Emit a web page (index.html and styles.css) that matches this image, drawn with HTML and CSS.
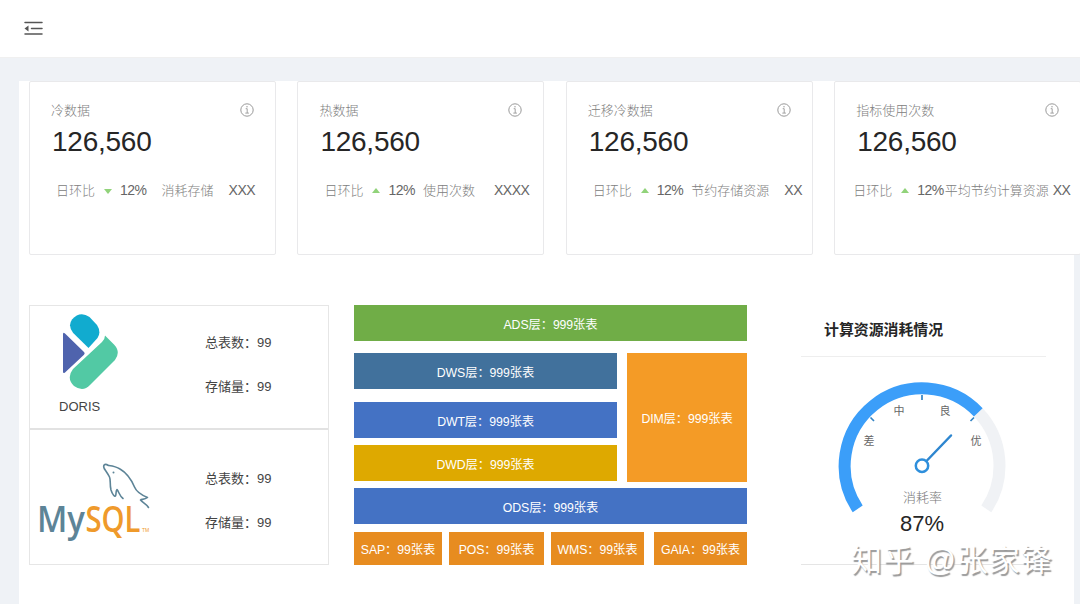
FILE: index.html
```html
<!DOCTYPE html>
<html lang="zh-CN">
<head>
<meta charset="utf-8">
<title>数据看板</title>
<link rel="stylesheet" href="styles.css">
</head>
<body>
<svg class="defs" width="0" height="0"><defs>
<symbol id="info" viewBox="0 0 14 14"><circle cx="7" cy="7" r="6.2" fill="none" stroke="#999" stroke-width="1"/><path d="M5.7 5.7H7.2V10M5.3 10.1H8.9" fill="none" stroke="#999" stroke-width=".9"/><circle cx="7" cy="3.8" r=".7" fill="#999"/></symbol>
</defs></svg>
<header class="topbar">
<svg class="fold" width="20" height="16" viewBox="0 0 20 16"><path d="M1 2.500H18M7.500 8.500H18M1 14H18" stroke="#555" stroke-width="1.500" stroke-linecap="round"/><path d="M4.500 5.500L.5 8.500L4.500 11.500Z" fill="#555"/></svg>
</header>
<main class="panel">
<section class="cards">
<article class="card"><div class="head"><span>冷数据</span><svg class="info"><use href="#info"/></svg></div><div class="num">126,560</div>
<div class="stats"><span>日环比</span><i class="tri down"></i><b>12%</b><span class="label l1">消耗存储</span><b class="val v1">XXX</b></div></article>
<article class="card"><div class="head"><span>热数据</span><svg class="info"><use href="#info"/></svg></div><div class="num">126,560</div>
<div class="stats"><span>日环比</span><i class="tri"></i><b>12%</b><span class="label l2">使用次数</span><b class="val v2">XXXX</b></div></article>
<article class="card"><div class="head"><span>迁移冷数据</span><svg class="info"><use href="#info"/></svg></div><div class="num">126,560</div>
<div class="stats"><span>日环比</span><i class="tri"></i><b>12%</b><span class="label l2">节约存储资源</span><b class="val v1">XX</b></div></article>
<article class="card"><div class="head"><span>指标使用次数</span><svg class="info"><use href="#info"/></svg></div><div class="num">126,560</div>
<div class="stats tight"><span>日环比</span><i class="tri"></i><b>12%</b><span class="label l4">平均节约计算资源</span><b class="val v4">XX</b></div></article>
</section>
<section class="lower">
<div class="sources">
<div class="source doris">
<div class="logo"><svg width="60" height="78" viewBox="0 0 60 78"><path d="M3 20.2Q3 17.5 5 19.5L24 38Q25.4 39.3 24 40.7L5 58.5Q3 60 3 57.5Z" fill="#4f63ad"/><path d="M13.2 19Q7.5 12 12 5.500Q20-3.500 29.500 3L37 11Q41.500 18 37.500 24L28.500 34Z" fill="#11abcf"/><path d="M45 21.500L54 30.500Q61 38 55 46L30 71Q23 78.500 14 72Q6 64 13 55L42 28Q45 25 45 21.500Z" fill="#52c9a4"/></svg><span>DORIS</span></div>
<dl class="facts"><dd>总表数：99</dd><dd>存储量：99</dd></dl>
</div>
<div class="source mysql">
<svg class="mylogo" width="118" height="84" viewBox="0 0 118 84">
<g fill="none" stroke="#5d8497" stroke-width="1.600" stroke-linejoin="round" stroke-linecap="round"><path d="M66.500 7C64.500 3 66.500 1 70.500 3.500C74 4 78 4.500 82 7C89 11 93.500 18 96.500 25C98.500 30 103.500 33 109.500 35.500C106.500 38 103.500 37 102.500 38C105 41 108.500 42 110.500 45.500"/><path d="M66.500 7C68.500 10 70 12 71.500 15C73 18.500 71.500 22 73 28C74.500 33 77 35 77.500 34C78.500 32 77.500 29 79 27.500C81 30 81.500 34 85 36.500"/></g><circle cx="75.500" cy="10.500" r="1" fill="#5d8497"/>
<text class="my" x="-1" y="69.500" textLength="48" lengthAdjust="spacingAndGlyphs">My</text><text class="sql" x="47.500" y="69.500" textLength="55" lengthAdjust="spacingAndGlyphs">SQL</text><text class="tm" x="104" y="70">TM</text></svg>
<dl class="facts"><dd>总表数：99</dd><dd>存储量：99</dd></dl>
</div>
</div>
<div class="layers">
<div class="box ads">ADS层：999张表</div>
<div class="mid"><div class="stack"><div class="box dws">DWS层：999张表</div><div class="box dwt">DWT层：999张表</div><div class="box dwd">DWD层：999张表</div></div><div class="box dim">DIM层：999张表</div></div>
<div class="box ods">ODS层：999张表</div>
<div class="systems"><div class="box">SAP：99张表</div><div class="box">POS：99张表</div><div class="box">WMS：99张表</div><div class="box gaia">GAIA：99张表</div></div>
</div>
<div class="usage">
<h2>计算资源消耗情况</h2>
<div class="chart"><svg width="245" height="208" viewBox="801 357 245 208">
<g fill="none" stroke-width="12"><path d="M978.300 412.450A77.500 77.500 0 0 1 986.300 508.900" stroke="#f0f2f5"/><path d="M857.700 508.900A77.500 77.500 0 0 1 978.300 412.450" stroke="#3b9ef9"/></g>
<path d="M922 395V400M870.500 417.500L874 421M974 417.500L970.500 421" stroke="#3384c4" stroke-width="1.700" fill="none"/>
<path d="M927 460.500L951 435.500" stroke="#2e86cf" stroke-width="2.500" stroke-linecap="round"/><circle cx="922" cy="465.700" r="6.200" fill="#fff" stroke="#2e8fdc" stroke-width="2.500"/>
<g class="grade"><text x="899" y="415">中</text><text x="945" y="415">良</text><text x="869" y="445">差</text><text x="976" y="445">优</text></g>
<text class="rate" x="922.500" y="502">消耗率</text><text class="percent" x="922" y="530.500">87%</text></svg></div>
</div>
</section>
</main>
<div class="watermark">知乎 @张家锋</div>
</body>
</html>
```
FILE: styles.css
```css
* { box-sizing: border-box; }
body { margin: 0; width: 1080px; height: 604px; overflow: hidden; position: relative; background: #eff2f6; color: #444; font-family: "Liberation Sans", "Noto Sans CJK SC", sans-serif; font-size: 13px; }
.defs { position: absolute; }
.topbar { height: 58px; padding: 20px 0 0 24px; background: #fff; border-bottom: 1px solid #f0f0f0; }
.fold { display: block; }
.panel { width: 1055px; height: 523px; margin: 23px 0 0 19px; padding-left: 10px; background: #fff; }
.cards { display: grid; grid-template-columns: repeat(4, 247px); column-gap: 21.4px; height: 174px; width: 1060px; }
.card { height: 174px; padding: 18px 0 0 21px; border: 1px solid #e9e9eb; border-radius: 2px; background: #fff; }
.head { display: flex; align-items: center; justify-content: space-between; height: 20px; padding-right: 21px; color: #808080; font-weight: 300; }
.head span { line-height: 18px; padding-top: 1px; }
.info { width: 14px; height: 14px; }
.num { height: 42px; font-size: 28px; line-height: 43px; color: #262626; padding-left: 1px; letter-spacing: -.25px; }
.stats { display: flex; align-items: baseline; height: 20px; margin-top: 18px; padding-left: 5px; color: #808080; font-weight: 300; line-height: 20px; white-space: nowrap; }
.stats.tight { padding-left: 0; margin-left: -3px; }
.stats b { font-size: 14px; font-weight: 400; color: #666; letter-spacing: -.5px; }
.tri { align-self: center; width: 8px; margin: 0 8px 0 9px; border: 4px solid transparent; border-top: 0; border-bottom: 5px solid #91d37a; }
.tri.down { margin-top: 2px; border-bottom: 0; border-top: 5px solid #91d37a; }
.l1 { margin-left: 15px; }
.l2 { margin-left: 8px; }
.l4 { margin-left: 1px; }
.v1 { margin-left: 15px; }
.v2 { margin-left: 19px; }
.v4 { margin-left: 4px; }
.lower { display: flex; padding-top: 50px; }
.sources { width: 300px; height: 260px; border: 1px solid #e6e6e6; }
.source { display: flex; }
.doris { height: 124px; border-bottom: 2px solid #e2e2e2; }
.logo { display: flex; flex-direction: column; width: 175px; padding: 8px 0 0 30px; }
.logo span { margin: 7px 0 0 -1px; line-height: 16px; }
.facts { margin: 0; padding-top: 27px; line-height: 20px; }
.facts dd { margin: 0 0 24px; }
.mylogo { margin: 32px 49px 0 8px; overflow: visible; }
.mysql .facts { padding-top: 39px; }
.my, .sql { font-family: "Open Sans", sans-serif; font-size: 36px; font-weight: 600; }
.my { fill: #5d8497; }
.sql { fill: #ef9a2b; }
.tm { font-size: 5px; fill: #ef9a2b; }
.layers { width: 393px; margin-left: 25px; }
.box { display: flex; align-items: center; justify-content: center; height: 36px; padding-top: 1px; color: #fff; font-size: 12.3px; letter-spacing: -.1px; white-space: nowrap; }
.ads { background: #70ad47; }
.mid { display: flex; justify-content: space-between; height: 129px; margin: 12px 0 6px; }
.stack { width: 263px; }
.dws { background: #41719c; }
.dwt { margin: 13px 0 7px; background: #4472c4; }
.dwd { background: #dea900; }
.dim { width: 120px; height: 129px; background: #f49b26; }
.ods { background: #4472c4; }
.systems { display: grid; grid-template-columns: 88px 95px 93px 93px; column-gap: 7px; margin-top: 8px; }
.systems .box { height: 33px; background: #e78c20; }
.systems .gaia { margin: 0 -3px 0 3px; }
.usage { width: 245px; margin-left: 54px; }
.usage h2 { height: 52px; margin: 0; padding-left: 23px; border-bottom: 1px solid #eee; font-size: 14.9px; line-height: 51px; color: #262626; }
.chart { height: 208px; border-bottom: 1px solid #e5e5e5; }
.chart svg { display: block; }
.chart text { text-anchor: middle; }
.grade { font-size: 11px; fill: #666; }
.rate { font-size: 13px; font-weight: 300; fill: #777; }
.percent { font-size: 22px; fill: #262626; }
.watermark { position: absolute; left: 851px; top: 540px; line-height: 42px; font-size: 31px; letter-spacing: .95px; color: #fff; text-shadow: 1.500px 1.500px 1px #999; white-space: nowrap; }
```
